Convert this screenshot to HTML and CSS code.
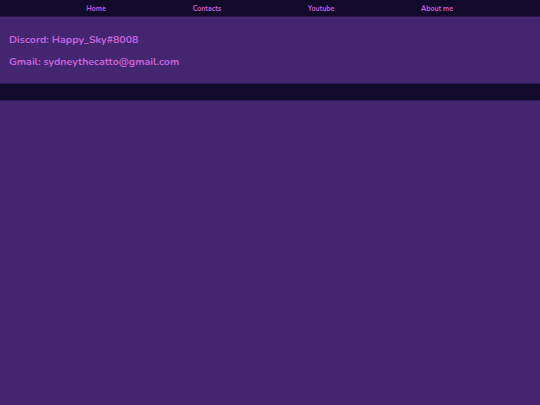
FILE: index.html
```html
<!DOCTYPE html>
<html>
<head>
<meta charset="utf-8">
<link rel="stylesheet" href="styles.css">
</head>
<body>
<nav class="nav">
  <a class="nav-link" href="#">Home</a>
  <a class="nav-link" href="#">Contacts</a>
  <a class="nav-link" href="#">Youtube</a>
  <a class="nav-link" href="#">About me</a>
</nav>
<section class="contacts">
  <p class="contact">Discord: Happy_Sky#8008</p>
  <p class="contact">Gmail: sydneythecatto@gmail.com</p>
</section>
<div class="band"></div>
</body>
</html>
```
FILE: styles.css
```css
html, body {
  margin: 0;
  padding: 0;
  background: #43266f;
  font-family: "Nunito", Lato, "Noto Sans", sans-serif;
}
.nav {
  box-sizing: border-box;
  height: 17px;
  background: #120a2b;
  border-bottom: 1px solid #2a1750;
  display: grid;
  grid-template-columns: 110px 112px 116px 116px;
  justify-content: center;
  align-items: center;
  padding-right: 4px;
}
.nav-link {
  color: #c35bd3;
  font-size: 7px;
  font-weight: 700;
  text-decoration: none;
  text-align: center;
}
.contacts {
  box-sizing: border-box;
  padding: 16px 9px 0;
  height: 67px;
  border-bottom: 1px solid #2d1a55;
}
.contact {
  margin: 0 0 9px;
  color: #c662d8;
  font-size: 10.6px;
  font-weight: 700;
  line-height: 13px;
}
.band {
  height: 16px;
  background: #120a2b;
  border-bottom: 1px solid #2d1a55;
}
```
